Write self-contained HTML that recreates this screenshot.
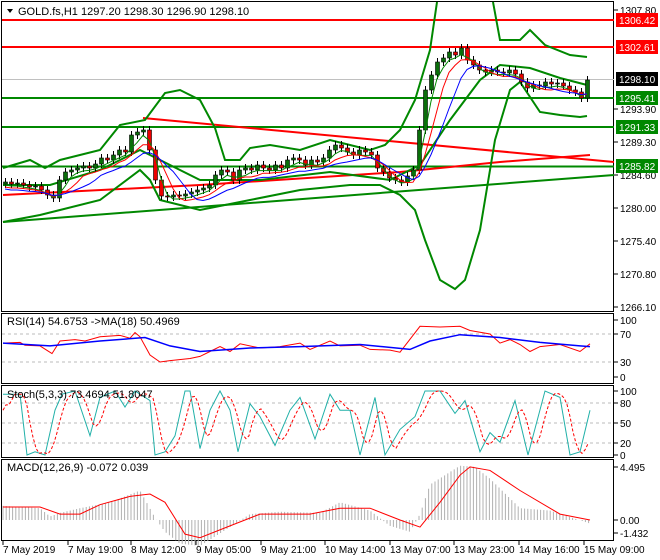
<!DOCTYPE html>
<html><head><meta charset="utf-8"><style>
body{margin:0;background:#fff;}
svg{display:block;font-family:"Liberation Sans",sans-serif;}
text{font-size:11px;fill:#000;}
#ax text{font-size:10px;}
</style></head><body>
<svg id="s" width="660" height="560" viewBox="0 0 660 560" xmlns="http://www.w3.org/2000/svg">
<rect x="0" y="0" width="660" height="560" fill="#fff"/>
<rect x="1.5" y="1.5" width="612" height="310" fill="none" stroke="#000"/>
<rect x="1.5" y="313.5" width="612" height="70" fill="none" stroke="#000"/>
<rect x="1.5" y="385.5" width="612" height="72" fill="none" stroke="#000"/>
<rect x="1.5" y="459.5" width="612" height="81" fill="none" stroke="#000"/>
<g id="main"></g>
<g id="ind"></g>
<path d="M7 9 L13 9 L10 13 Z" fill="#000"/>
<text x="18" y="15">GOLD.fs,H1  1297.20 1298.30 1296.90 1298.10</text>
<text x="7" y="325">RSI(14) 54.6753  -&gt;MA(18) 50.4969</text>
<text x="7" y="398">Stoch(5,3,3) 73.4694 51.8047</text>
<text x="7" y="471">MACD(12,26,9) -0.072 0.039</text>
<g id="ax"></g>
</svg>
<script>
const NS="http://www.w3.org/2000/svg";
const M=document.getElementById('main'),I=document.getElementById('ind'),A=document.getElementById('ax');
function el(p,t,a,txt){const e=document.createElementNS(NS,t);for(const k in a)e.setAttribute(k,a[k]);if(txt!==undefined)e.textContent=txt;p.appendChild(e);return e;}
function pl(p,pts,c,w,extra){const a={points:pts.map(q=>q.join(',')).join(' '),fill:'none',stroke:c,'stroke-width':w};Object.assign(a,extra||{});el(p,'polyline',a);}
function interp(k,x){for(let i=0;i<k.length-1;i++){if(x>=k[i][0]&&x<=k[i+1][0]){const t=(x-k[i][0])/(k[i+1][0]-k[i][0]);return k[i][1]+t*(k[i+1][1]-k[i][1]);}}return k[k.length-1][1];}
el(M,'line',{x1:2,y1:79.5,x2:614,y2:79.5,stroke:'#c0c0c0'});
[[20,'#f00'],[47,'#f00'],[98,'#080'],[127,'#080'],[166.5,'#080']].forEach(([y,c])=>el(M,'line',{x1:2,y1:y,x2:614,y2:y,stroke:c,'stroke-width':2}));
pl(M,[[143,118],[614,162]],'#f00',2);
pl(M,[[3,195],[200,185],[400,172],[500,162],[590,155]],'#f00',2);
pl(M,[[3,222],[614,175]],'#080',2);
pl(M,[[3,168],[30,160],[45,168],[60,160],[100,150],[120,125],[145,120],[165,93],[180,90],[200,100],[215,128],[225,160],[240,160],[250,148],[270,145],[300,150],[330,140],[350,145],[370,150],[385,145],[400,130],[415,100],[430,50],[437,2]],'#080',2);
pl(M,[[493,2],[500,40],[520,40],[530,30],[545,45],[570,55],[587,57]],'#080',2);
pl(M,[[3,185],[50,185],[100,170],[140,150],[160,160],[200,180],[260,180],[330,172],[390,180],[420,165],[450,120],[480,80],[500,65],[530,68],[560,78],[587,85]],'#080',2);
pl(M,[[3,222],[40,215],[60,210],[100,200],[140,170],[150,180],[160,200],[200,210],[250,200],[300,190],[350,185],[380,185],[400,195],[415,210],[425,240],[440,280],[455,289],[465,280],[480,230],[495,140],[510,90],[520,82],[540,112],[560,115],[580,117],[587,116]],'#080',2);
const C=[182,184,183,185,187,186,190,195,198,180,172,170,168,166,168,164,158,160,155,150,152,135,132,130,150,180,196,197,195,196,194,192,190,188,185,175,170,172,180,170,168,170,165,168,170,165,168,160,158,160,165,160,162,158,150,145,148,152,155,150,152,155,168,172,178,180,182,176,170,130,90,75,62,58,52,55,48,60,65,70,72,70,72,73,70,74,82,88,85,86,82,84,83,86,90,92,98,80];
const ma1=[],ma2=[],ma3=[];
C.forEach((c,i)=>{const x=5+6*i;const p=i?C[i-1]:c+2;const top=Math.min(p,c),bot=Math.max(p,c);
el(M,'line',{x1:x+0.5,y1:top-4,x2:x+0.5,y2:bot+4,stroke:'#000'});
el(M,'rect',{x:x-1.5,y:top,width:4,height:Math.max(bot-top,1),fill:c<p?'#0a6e0a':'#e00',stroke:'#000','stroke-width':0.6});
const av=n=>{let s=0,k=0;for(let j=Math.max(0,i-n+1);j<=i;j++){s+=C[j];k++;}return s/k;};
ma1.push([x,av(3)+3]);ma2.push([x,av(5)+5]);ma3.push([x,av(8)+7]);});
pl(M,ma1,'#080',1);pl(M,ma2,'#f00',1);pl(M,ma3,'#00f',1);
[[334],[362]].forEach(([y])=>el(I,'line',{x1:2,y1:y,x2:614,y2:y,stroke:'#bbb','stroke-dasharray':'3,3'}));
const ry=v=>383-v*0.7;
const rr=[[3,57],[20,58],[25,54],[40,53],[52,42],[60,60],[75,62],[85,60],[100,66],[120,68],[130,64],[135,72],[140,66],[150,40],[160,30],[170,32],[190,35],[200,38],[210,45],[220,52],[230,45],[240,56],[260,50],[280,52],[300,57],[310,48],[330,60],[340,53],[360,54],[370,48],[390,47],[400,44],[420,81],[440,80],[460,81],[470,75],[490,70],[500,57],[510,62],[520,55],[530,45],[540,52],[560,55],[580,45],[590,56]];
const rb=[[3,57],[50,53],[100,60],[145,65],[170,53],[200,45],[250,50],[300,52],[360,55],[410,48],[430,60],[460,69],[500,65],[540,58],[580,53],[590,52]];
pl(I,rr.map(([x,v])=>[x,ry(v)]),'#f00',1);pl(I,rb.map(([x,v])=>[x,ry(v)]),'#00f',1.5);
[[403],[423],[443]].forEach(([y])=>el(I,'line',{x1:2,y1:y,x2:614,y2:y,stroke:'#bbb','stroke-dasharray':'3,3'}));
const sy=v=>455-v*0.64;
const sc=[[3,95],[20,95],[27,0],[35,5],[45,0],[55,70],[62,95],[75,100],[90,30],[100,90],[115,100],[125,75],[135,100],[150,85],[155,0],[165,5],[175,30],[185,100],[190,100],[200,10],[210,70],[220,100],[230,70],[238,5],[250,80],[260,60],[275,15],[290,70],[300,90],[315,25],[330,95],[340,70],[350,70],[360,0],[375,90],[385,0],[400,40],[415,60],[425,100],[440,100],[455,65],[465,85],[480,5],[490,35],[500,20],[515,85],[528,0],[545,100],[560,90],[570,0],[580,5],[590,70]];
pl(I,sc.map(([x,v])=>[x,sy(v)]),'#20b0a8',1);
const sd=[];for(let x=3;x<=590;x+=3){const v=(interp(sc,x-3)+interp(sc,x-7)+interp(sc,x-11))/3;sd.push([x,sy(v)]);}
pl(I,sd,'#f00',1,{'stroke-dasharray':'3,2'});
const my=v=>520-v*11.8;
const mh=[[3,1.2],[40,1.0],[50,0.3],[60,0.6],[80,1.0],[110,1.5],[140,2.5],[155,0.2],[165,-1.0],[180,-2.0],[200,-2.2],[230,-0.6],[250,0.5],[280,0.7],[320,0.6],[340,1.5],[370,0.8],[390,-0.5],[410,-1.0],[420,0.5],[430,3.0],[460,4.6],[475,4.5],[490,3.5],[520,1.0],[550,0.8],[590,-0.3]];
for(let x=3;x<=590;x+=3.2){const v=interp(mh,x);el(I,'line',{x1:x,y1:my(0),x2:x,y2:my(v),stroke:'#b0b0b0'});}
const ms=[[3,1.1],[40,1.1],[60,0.5],[80,0.5],[100,1.3],[130,2.0],[150,2.2],[165,1.5],[185,-1.2],[200,-1.5],[230,-0.5],[260,0.5],[310,0.5],[340,1.0],[370,1.0],[400,0.0],[420,-0.6],[440,1.5],[460,3.8],[470,4.5],[490,4.2],[520,2.5],[560,0.5],[590,0.0]];
pl(I,ms.map(([x,v])=>[x,my(v)]),'#f00',1);
[[10,'1307.80'],[109,'1293.90'],[142,'1289.30'],[175,'1284.60'],[208,'1280.00'],[241,'1275.40'],[274,'1270.80'],[307,'1266.10'],
[320,'100'],[334,'70'],[362,'30'],[377,'0'],[391,'100'],[403,'80'],[423,'50'],[443,'20'],[455,'0'],[467,'4.495'],[520,'0.00'],[533,'-1.432']].forEach(([y,t])=>{
el(A,'line',{x1:614,y1:y,x2:618,y2:y,stroke:'#000'});el(A,'text',{x:620,y:y+4},t);});
[[20,'1306.42','#f00','#fff'],[47,'1302.61','#f00','#fff'],[79,'1298.10','#000','#fff'],[98,'1295.41','#080','#fff'],[127,'1291.33','#080','#fff'],[166,'1285.82','#080','#fff']].forEach(([y,t,b,f])=>{
el(A,'rect',{x:616,y:y-7,width:42,height:14,fill:b});el(A,'text',{x:619,y:y+4,style:'fill:'+f},t);});
const dl=['7 May 2019','7 May 19:00','8 May 12:00','9 May 05:00','9 May 21:00','10 May 14:00','13 May 07:00','13 May 23:00','14 May 16:00','15 May 09:00'];
const dx=[3,68,131,196,261,325,390,454,519,584];
dl.forEach((t,i)=>{el(A,'line',{x1:dx[i],y1:541,x2:dx[i],y2:545,stroke:'#000'});el(A,'text',{x:dx[i],y:553},t);});
</script>
</body></html>
